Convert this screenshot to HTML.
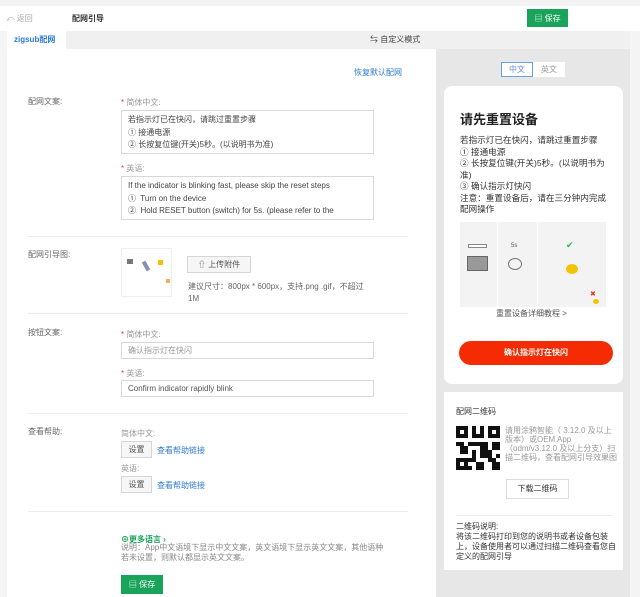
<!DOCTYPE html>
<html><head><meta charset="utf-8"><style>
*{margin:0;padding:0;box-sizing:border-box}
body{width:640px;height:597px;overflow:hidden;background:#f4f4f4;font-family:"Liberation Sans","Noto Sans CJK SC",sans-serif;font-size:8px;color:#555;position:relative}
.a{position:absolute}
.top{left:0;top:6px;width:640px;height:25px;background:#fff}
.gbtn{background:#1aa35a;color:#fff;font-size:8px;display:flex;align-items:center;justify-content:center;gap:3px}
.lbl{color:#666;font-size:8px}
.req{color:#999}.req:before{content:"* ";color:#e4393c}
.ta{background:#fff;border:1px solid #d8d8d8;padding:3px 6px;line-height:12.5px;overflow:hidden;color:#444}
.inp{background:#fff;border:1px solid #d8d8d8;padding:0 6px;height:17px;line-height:15px;color:#999}
.hr{height:1px;background:#ececec}
.btn{background:#f6f6f6;border:1px solid #d6d6d6;color:#555;display:flex;align-items:center;justify-content:center}
.link{color:#2b7ad6}
</style></head><body>
<div class="a top"></div>
<div class="a" style="left:6px;top:13px;color:#aaa">⤺ 返回</div>
<div class="a" style="left:72px;top:13px;color:#333;font-weight:bold">配网引导</div>
<div class="a gbtn" style="left:527px;top:9px;width:41px;height:18px">▤ 保存</div>
<div class="a" style="left:7px;top:31px;width:623px;height:18px;background:#f0f0f0"></div>
<div class="a" style="left:7px;top:31px;width:59px;height:18px;background:#fff;color:#2b7ad6;font-weight:bold;padding:3px 0 0 7px">zigsub配网</div>
<div class="a" style="left:370px;top:34px;color:#444">⇆ 自定义模式</div>
<div class="a" style="left:7px;top:49px;width:429px;height:548px;background:#fff"></div>
<div class="a" style="left:436px;top:49px;width:194px;height:548px;background:#e7e7e7"></div>

<div class="a link" style="left:354px;top:67px">恢复默认配网</div>
<div class="a lbl" style="left:28px;top:96px">配网文案:</div>
<div class="a req" style="left:121px;top:97px">简体中文:</div>
<div class="a ta" style="left:121px;top:110px;width:253px;height:44px">若指示灯已在快闪，请跳过重置步骤<br>① 接通电源<br>② 长按复位键(开关)5秒。(以说明书为准)<br>③ 确认指示灯快闪</div>
<div class="a req" style="left:121px;top:163px">英语:</div>
<div class="a ta" style="left:121px;top:176px;width:253px;height:44px">If the indicator is blinking fast, please skip the reset steps<br>①&nbsp; Turn on the device<br>②&nbsp; Hold RESET button (switch) for 5s. (please refer to the<br>③</div>
<div class="a hr" style="left:28px;top:236px;width:380px"></div>

<div class="a lbl" style="left:28px;top:249px">配网引导图:</div>
<div class="a" style="left:121px;top:248px;width:51px;height:49px;background:#fff;border:1px solid #eee">
<div class="a" style="left:5px;top:10px;width:6px;height:5px;background:#777"></div>
<div class="a" style="left:22px;top:12px;width:4px;height:10px;background:#8890b0;transform:rotate(-30deg)"></div>
<div class="a" style="left:36px;top:11px;width:5px;height:5px;background:#f3c300"></div>
<div class="a" style="left:44px;top:30px;width:4px;height:4px;background:#f0b060"></div>
</div>
<div class="a btn" style="left:187px;top:256px;width:64px;height:17px">⇧ 上传附件</div>
<div class="a" style="left:188px;top:281px;color:#666;line-height:12px;width:180px">建议尺寸：800px * 600px，支持.png .gif，不超过1M</div>
<div class="a hr" style="left:28px;top:313px;width:380px"></div>

<div class="a lbl" style="left:28px;top:327px">按钮文案:</div>
<div class="a req" style="left:121px;top:329px">简体中文:</div>
<div class="a inp" style="left:121px;top:342px;width:253px">确认指示灯在快闪</div>
<div class="a req" style="left:121px;top:368px">英语:</div>
<div class="a inp" style="left:121px;top:380px;width:253px;color:#555">Confirm indicator rapidly blink</div>
<div class="a hr" style="left:28px;top:413px;width:380px"></div>

<div class="a lbl" style="left:28px;top:426px">查看帮助:</div>
<div class="a" style="left:121px;top:428px;color:#999">简体中文:</div>
<div class="a btn" style="left:121px;top:441px;width:31px;height:17px">设置</div>
<div class="a link" style="left:157px;top:445px">查看帮助链接</div>
<div class="a" style="left:121px;top:463px;color:#999">英语:</div>
<div class="a btn" style="left:121px;top:476px;width:31px;height:17px">设置</div>
<div class="a link" style="left:157px;top:480px">查看帮助链接</div>
<div class="a hr" style="left:28px;top:511px;width:380px"></div>

<div class="a" style="left:121px;top:534px;color:#1aa35a;font-weight:bold">⊕更多语言 ›</div>
<div class="a" style="left:121px;top:543px;color:#888;line-height:10px;width:265px">说明：App中文语境下显示中文文案，英文语境下显示英文文案，其他语种若未设置，则默认都显示英文文案。</div>
<div class="a gbtn" style="left:121px;top:575px;width:42px;height:19px">▤ 保存</div>

<!-- right preview -->
<div class="a" style="left:501px;top:62px;width:32px;height:15px;background:#fff;border:1px solid #6aa0e0;color:#6a8ad6;text-align:center;line-height:13px">中文</div>
<div class="a" style="left:533px;top:62px;width:32px;height:15px;background:#fff;color:#999;text-align:center;line-height:15px">英文</div>
<div class="a" style="left:444px;top:86px;width:179px;height:298px;background:#fff;border-radius:8px"></div>
<div class="a" style="left:460px;top:109px;font-size:13px;font-weight:bold;color:#222">请先重置设备</div>
<div class="a" style="left:460px;top:135px;width:152px;line-height:11.5px;color:#333;font-size:8.6px">若指示灯已在快闪，请跳过重置步骤<br>① 接通电源<br>② 长按复位键(开关)5秒。(以说明书为准)<br>③ 确认指示灯快闪<br>注意：重置设备后，请在三分钟内完成配网操作</div>
<div class="a" style="left:460px;top:222px;width:146px;height:85px;background:#f3f3f3"></div>
<div class="a" style="left:497px;top:222px;width:1px;height:85px;background:#fff"></div>
<div class="a" style="left:537px;top:222px;width:1px;height:85px;background:#fff"></div>
<div class="a" style="left:468px;top:244px;width:19px;height:4px;border:1px solid #888;background:#fff"></div>
<div class="a" style="left:467px;top:256px;width:21px;height:15px;background:#999;border:1px solid #666"></div>
<div class="a" style="left:508px;top:258px;width:14px;height:12px;border:1px solid #777;border-radius:50%"></div>
<div class="a" style="left:511px;top:243px;font-size:6px;color:#555">5s</div>
<div class="a" style="left:566px;top:264px;width:12px;height:10px;background:#f3c400;border-radius:50%"></div>
<div class="a" style="left:566px;top:240px;color:#2ab04f;font-size:9px">✔</div>
<div class="a" style="left:590px;top:290px;color:#e33;font-size:7px">✖</div>
<div class="a" style="left:593px;top:299px;width:6px;height:5px;background:#f3c400;border-radius:50%"></div>
<div class="a" style="left:496px;top:308px;color:#555;font-size:8px">重置设备详细教程 &gt;</div>
<div class="a" style="left:459px;top:341px;width:154px;height:24px;background:#f42b03;border-radius:12px;color:#fff;font-weight:bold;text-align:center;line-height:24px">确认指示灯在快闪</div>

<div class="a" style="left:444px;top:392px;width:179px;height:178px;background:#fff"></div>
<div class="a" style="left:456px;top:406px;color:#333">配网二维码</div>
<svg class="a" style="left:456px;top:426px" width="44" height="44" viewBox="0 0 11 11"><rect width="11" height="11" fill="#fff"/><g fill="#111"><rect x="0" y="0" width="3" height="3"/><rect x="8" y="0" width="3" height="3"/><rect x="0" y="8" width="3" height="3"/><rect x="4" y="0" width="1" height="3"/><rect x="6" y="0" width="1" height="2"/><rect x="5" y="2" width="2" height="1"/><rect x="3" y="4" width="3" height="1"/><rect x="0" y="4" width="2" height="1"/><rect x="1" y="5" width="2" height="2"/><rect x="6" y="4" width="2" height="3"/><rect x="9" y="4" width="2" height="2"/><rect x="8" y="6" width="1" height="2"/><rect x="4" y="6" width="1" height="3"/><rect x="3" y="8" width="2" height="1"/><rect x="5" y="9" width="2" height="2"/><rect x="6" y="7" width="2" height="1"/><rect x="8" y="8" width="2" height="1"/><rect x="9" y="9" width="2" height="2"/><rect x="3" y="10" width="1" height="1"/><rect x="10" y="7" width="1" height="1"/></g><g fill="#fff"><rect x="1" y="1" width="1" height="1"/><rect x="9" y="1" width="1" height="1"/><rect x="1" y="9" width="1" height="1"/></g></svg>
<div class="a" style="left:505px;top:426px;width:112px;line-height:9px;color:#999;font-size:8px">请用涂鸦智能（ 3.12.0 及以上版本）或OEM App（odm/v3.12.0 及以上分支）扫描二维码，查看配网引导效果图</div>
<div class="a" style="left:506px;top:479px;width:63px;height:20px;border:1px solid #ddd;background:#fff;color:#333;text-align:center;line-height:18px">下载二维码</div>
<div class="a hr" style="left:456px;top:515px;width:156px"></div>
<div class="a" style="left:456px;top:522px;width:160px;color:#333;line-height:10px">二维码说明:<br>将该二维码打印到您的说明书或者设备包装上，设备使用者可以通过扫描二维码查看您自定义的配网引导</div>
</body></html>
